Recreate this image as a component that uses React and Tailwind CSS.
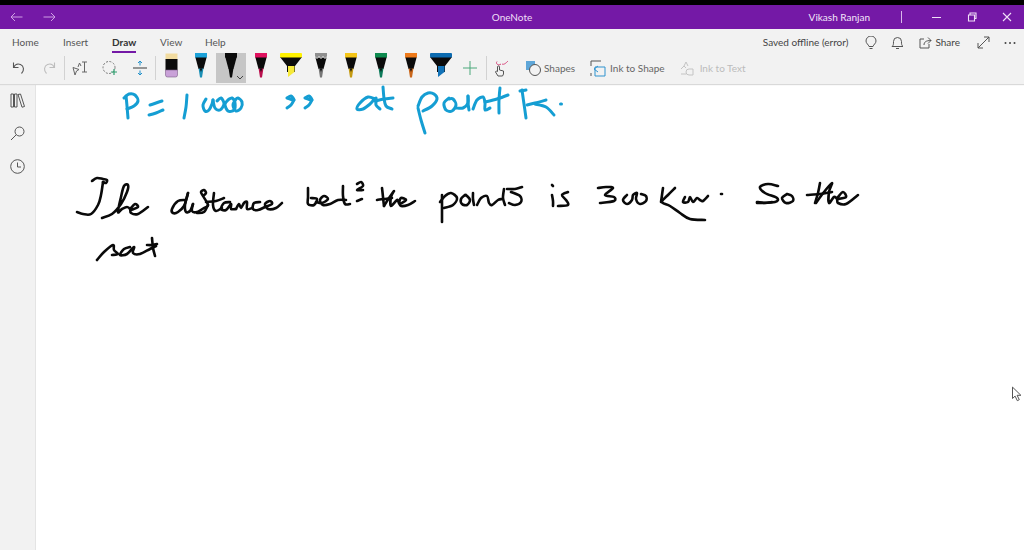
import React from "react";

const font = { fontFamily: 'Lato,"Open Sans","Noto Sans",sans-serif' };

function smooth(p) {
  let d = `M${p[0][0]} ${p[0][1]}`;
  for (let i = 0; i < p.length - 1; i++) {
    const a = p[Math.max(0, i - 1)], b = p[i], c = p[i + 1], e = p[Math.min(p.length - 1, i + 2)];
    const c1 = [b[0] + (c[0] - a[0]) / 6, b[1] + (c[1] - a[1]) / 6];
    const c2 = [c[0] - (e[0] - b[0]) / 6, c[1] - (e[1] - b[1]) / 6];
    d += ` C${c1[0].toFixed(1)} ${c1[1].toFixed(1)} ${c2[0].toFixed(1)} ${c2[1].toFixed(1)} ${c[0]} ${c[1]}`;
  }
  return d;
}

const blue = [
  [[126,96],[127,106],[128,118]],
  [[124,98],[129,94],[135,95],[138,101],[134,106],[127,109]],
  [[150,105],[156,103],[162,101]],
  [[149,115],[156,113],[163,110]],
  [[187,95],[186,107],[184,118]],
  [[206,99],[203,105],[205,111],[209,110],[212,104],[213,100]],
  [[213,100],[215,108],[220,110],[224,104],[221,98],[217,101]],
  [[229,99],[225,104],[228,111],[234,110],[235,103],[232,98],[228,100]],
  [[236,99],[233,105],[236,111],[241,108],[242,102],[238,98],[235,100]],
  [[287,98],[291,96],[294,100],[290,99],[287,98]],
  [[294,100],[291,105],[287,108]],
  [[305,98],[309,96],[312,100],[308,99],[305,98]],
  [[312,100],[309,105],[305,108]],
  [[375,99],[368,97],[360,103],[357,109],[363,109],[370,104],[376,98],[376,105],[380,109]],
  [[383,87],[384,98],[386,106],[392,109]],
  [[375,101],[384,99],[393,98]],
  [[418,108],[421,120],[425,133]],
  [[418,106],[422,97],[428,93],[434,94],[437,99],[432,106],[423,111]],
  [[449,98],[444,103],[446,110],[452,111],[456,105],[453,99],[449,99]],
  [[456,108],[463,108],[468,103],[468,96]],
  [[468,96],[468,103],[469,110]],
  [[473,109],[477,100],[483,97],[485,103],[485,110],[490,108]],
  [[500,88],[499,100],[499,113]],
  [[485,102],[497,99],[508,95]],
  [[522,90],[524,104],[526,118]],
  [[520,91],[526,90]],
  [[527,105],[535,103],[546,100]],
  [[535,104],[546,107],[554,115]],
  [[560.5,104],[561.5,104]],
];

const black = [
  [[92,181],[97,178],[103,179],[107,180],[106,183],[103,182]],
  [[103,182],[101,195],[98,205],[91,214],[83,214],[77,212]],
  [[102,218],[112,214],[121,204],[127,192],[128,185],[124,186],[121,197],[118,212],[122,209],[127,207],[130,209],[131,213],[138,214],[148,207]],
  [[131,210],[138,207],[135,204],[131,208]],
  [[186,200],[178,201],[172,209],[173,213],[178,212],[184,206],[187,197],[188,193]],
  [[188,193],[185,205],[186,212],[190,211],[193,204]],
  [[193,204],[192,211],[197,212],[204,208],[208,205],[203,196],[201,192],[204,190],[206,193],[203,196]],
  [[208,205],[204,212],[197,213]],
  [[206,202],[216,201],[224,198]],
  [[214,193],[213,205],[216,211],[222,208]],
  [[230,202],[224,203],[221,209],[226,210],[231,204],[231,209],[236,209]],
  [[236,209],[239,204],[241,208],[244,203],[247,202],[247,209],[252,208]],
  [[260,202],[254,203],[253,209],[258,210],[265,207]],
  [[265,207],[272,204],[270,201],[265,204],[268,209],[276,208],[282,203]],
  [[308,188],[308,197],[308,204],[314,205],[317,199],[311,198]],
  [[316,202],[322,203],[328,199],[324,196],[320,200],[323,205],[330,204],[338,200],[346,200]],
  [[343,186],[343,196],[345,204],[350,204]],
  [[357,184],[361,182],[363,186],[357,190],[363,190]],
  [[357,201],[362,199]],
  [[377,200],[385,199],[392,198]],
  [[382,188],[383,197],[384,206]],
  [[384,206],[389,198],[394,191],[391,197],[391,206],[397,200],[399,203],[401,206],[408,205],[415,201]],
  [[400,204],[406,200],[401,198],[399,203]],
  [[442,195],[442,208],[442,222]],
  [[440,202],[445,196],[451,193],[457,198],[453,205],[444,208]],
  [[465,195],[461,199],[462,204],[467,205],[470,200],[466,195]],
  [[473,193],[473,199],[474,205]],
  [[477,205],[481,198],[487,196],[489,203],[492,205],[498,200],[502,199]],
  [[504,189],[503,198],[505,205]],
  [[507,189],[515,189],[522,187]],
  [[511,192],[520,196],[521,202],[515,205],[509,203]],
  [[552,195],[553,201],[553,206]],
  [[552,185],[553,186]],
  [[568,192],[562,195],[566,200],[568,205],[558,206]],
  [[598,188],[606,187],[613,188],[605,195],[614,197],[614,201],[600,203]],
  [[627,195],[623,200],[627,204],[632,200],[633,195],[637,193],[636,199],[640,204],[646,201],[646,196],[641,194]],
  [[663,188],[662,195],[661,202]],
  [[675,188],[668,195],[662,202],[670,206],[680,213],[690,219],[705,220]],
  [[685,197],[683,202],[688,202],[690,197],[693,202],[697,198],[700,200],[703,201],[708,196]],
  [[721,194],[722,194]],
  [[778,186],[768,184],[760,187],[765,193],[777,198],[775,202],[757,203]],
  [[757,202],[765,203],[772,202]],
  [[787,194],[782,198],[786,203],[793,201],[792,196],[787,194]],
  [[807,195],[820,194],[832,192]],
  [[820,183],[818,193],[815,203]],
  [[816,203],[824,192],[832,183],[829,192],[829,203],[834,197],[837,199],[838,203],[846,204],[858,195]],
  [[838,199],[846,197],[843,192],[838,197]],
  [[97,260],[104,252],[113,245],[114,250],[118,254],[112,255]],
  [[130,247],[124,249],[120,255],[127,254],[134,247],[133,253],[140,254],[150,249],[156,246]],
  [[152,238],[153,248],[155,256]],
  [[147,245],[152,245],[157,244]],
];

function Ink() {
  return (
    <svg viewBox="36 84 988 466" className="block h-full w-full" fill="none" strokeLinecap="round" strokeLinejoin="round">
      <g stroke="#159ed3" strokeWidth="3">
        {blue.map((s, i) => <path key={i} d={smooth(s)} />)}
      </g>
      <g stroke="#0a0a0a" strokeWidth="2.6">
        {black.map((s, i) => <path key={i} d={smooth(s)} />)}
      </g>
      <path d="M1012.5 387.5v11l2.6-2.4 2.2 4.6 2-1-2.2-4.4h3.4z" fill="#fff" stroke="#555" strokeWidth="1" />
    </svg>
  );
}

function Pen({ band, tip, top }) {
  return (
    <svg width="14" height="26" viewBox="0 0 14 26">
      <path d="M1 3h12l-3.500 13h-5z" fill="#0b0b0b" />
      <rect x="1" y="0" width="12" height="4.500" fill={band} />
      <path d="M4.600 15.500h4.800L8 24.500H6z" fill={tip} />
      <path d="M5.800 15.500h2.400L7 19z" fill="#0b0b0b" />
      {top ? <path d="M1 3.500l2 2 2-2 2 2 2-2 2 2 2-2" stroke="#fff" strokeWidth="1" fill="none" /> : null}
    </svg>
  );
}

function Marker({ band, tip }) {
  return (
    <svg width="24" height="26" viewBox="0 0 24 26">
      <path d="M1 4h22l-7 9v6H8v-6z" fill="#0b0b0b" />
      <rect x="1" y="0" width="22" height="4.500" rx="1" fill={band} />
      <path d="M9 13h6.500v6L9 24z" fill={tip} />
    </svg>
  );
}

function Slot({ children, selected }) {
  return (
    <div className={`relative flex h-[30px] w-[30px] items-start justify-center ${selected ? "bg-[#c6c6c6]" : ""}`}>
      {children}
    </div>
  );
}

const Sep = () => <div className="h-[24px] w-px self-center bg-[#d2d2d2]" />;

function IconBtn({ children, w = "w-[30px]" }) {
  return <div className={`flex h-[30px] ${w} shrink-0 items-center justify-center`}>{children}</div>;
}

export default function App() {
  return (
    <div className="flex h-[550px] w-[1024px] flex-col overflow-hidden bg-white text-[#333]" style={font}>
      <div className="h-[5px] bg-black" />
      {/* Title bar */}
      <div className="relative flex h-[24px] items-center bg-[#7419a6] text-[10px] text-[#f0dff7]">
        <div className="flex w-[65px] items-center pl-[10px]">
          <svg width="13" height="10" viewBox="0 0 13 10" fill="none" stroke="#cf9fe4" strokeWidth="1"><path d="M12.500 5H1M5 1L1 5l4 4" /></svg>
          <svg width="13" height="10" viewBox="0 0 13 10" fill="none" stroke="#cf9fe4" strokeWidth="1" className="ml-[20px]"><path d="M.5 5H12M8 1l4 4-4 4" /></svg>
        </div>
        <div className="absolute left-0 right-0 top-[4px] text-center leading-[16px]">OneNote</div>
        <div className="ml-auto flex items-center">
          <span className="text-[#f3e6fa]">Vikash Ranjan</span>
          <div className="ml-[31px] h-[12px] w-px bg-[#d9b8ea]" />
          <div className="ml-[29px] flex w-[11px] justify-center"><div className="h-px w-[9px] bg-[#f0dff7]" /></div>
          <svg width="10" height="10" viewBox="0 0 10 10" fill="none" stroke="#f0dff7" strokeWidth="1.100" className="ml-[25px]"><path d="M1.500 3h6v6h-6zM3 3V1h6v5.500H7.500" /></svg>
          <svg width="10" height="10" viewBox="0 0 10 10" fill="none" stroke="#f0dff7" strokeWidth="1.100" className="ml-[25px] mr-[12px]"><path d="M1 1l8 8M9 1L1 9" /></svg>
        </div>
      </div>
      {/* Ribbon */}
      <div className="z-10 flex h-[55px] flex-col bg-[#f2f2f2] shadow-[0_1px_1px_#d9d9d9]">
        <div className="flex h-[24px] items-center pt-[3px] text-[10px]">
          <div className="flex items-center pl-[12px] text-[#555]">
            <span className="w-[51px]">Home</span>
            <span className="w-[49px]">Insert</span>
            <span className="relative w-[48px] font-bold text-[#333]">
              Draw
              <span className="absolute left-0 top-[16px] h-[2px] w-[24px] bg-[#7419a6]" />
            </span>
            <span className="w-[45px]">View</span>
            <span>Help</span>
          </div>
          <div className="ml-auto flex items-center text-[#444]">
            <span>Saved offline (error)</span>
            <svg width="12" height="14" viewBox="0 0 12 14" fill="none" stroke="#555" className="ml-[17px]"><path d="M4 10.500C3.500 8.500 1 7.500 1 5a5 5 0 0 1 10 0c0 2.500-2.500 3.500-3 5.500zM4.500 12.500h3" /></svg>
            <svg width="13" height="14" viewBox="0 0 13 14" fill="none" stroke="#555" className="ml-[14px]"><path d="M1 10.500c1.500-1 1.500-2.500 1.500-5a4 4 0 0 1 8 0c0 2.500 0 4 1.500 5zM5 12.500h3" /></svg>
            <svg width="13" height="13" viewBox="0 0 13 13" fill="none" stroke="#555" className="ml-[15px]"><path d="M5 3H1v9h9V8M5 9c0-3 2-4.500 7-4.500M9 1.500l3 3-3 3" /></svg>
            <span className="ml-[3px]">Share</span>
            <svg width="13" height="13" viewBox="0 0 13 13" fill="none" stroke="#555" className="ml-[17px]"><path d="M1 12L12 1M7 1h5v5M1 7v5h5" /></svg>
            <svg width="12" height="4" viewBox="0 0 12 4" fill="#444" className="ml-[14px] mr-[8px]"><circle cx="1.500" cy="2" r="1" /><circle cx="6" cy="2" r="1" /><circle cx="10.500" cy="2" r="1" /></svg>
          </div>
        </div>
        <div className="flex h-[30px] items-center text-[10px]">
          <div className="w-[4px]" />
          <IconBtn>
            <svg width="14" height="14" viewBox="0 0 14 14" fill="none" stroke="#555" strokeWidth="1.100"><path d="M1.500 1.500v5h5M1.500 6.500C3 3.500 6 2.500 8.500 3.500c3.500 1.500 4 6 1 9" /></svg>
          </IconBtn>
          <IconBtn>
            <svg width="14" height="14" viewBox="0 0 14 14" fill="none" stroke="#bdbdbd" strokeWidth="1.100"><path d="M12.500 1.500v5h-5M12.500 6.500C11 3.500 8 2.500 5.500 3.500c-3.500 1.500-4 6-1 9" /></svg>
          </IconBtn>
          <Sep />
          <IconBtn>
            <svg width="16" height="15" viewBox="0 0 16 15" fill="none" stroke="#666"><path d="M1 6.500l6 2-2.500 1.500L3 14zM6 6l1.500-4L9 5M10 1h5M12.500 1v10M10 11h5" /></svg>
          </IconBtn>
          <IconBtn>
            <svg width="16" height="16" viewBox="0 0 16 16" fill="none"><circle cx="7" cy="7.500" r="6" stroke="#777" strokeDasharray="2 1.500" /><path d="M12 9v6M9 12h6" stroke="#2f9e6e" strokeWidth="1.200" /></svg>
          </IconBtn>
          <IconBtn>
            <svg width="14" height="16" viewBox="0 0 14 16" fill="none"><path d="M0 8h14" stroke="#777" strokeWidth="1.500" /><path d="M7 5.500V1M5 3l2-2 2 2M7 10.500V15M5 13l2 2 2-2" stroke="#1f8fc9" /></svg>
          </IconBtn>
          <Sep />
          <div className="flex h-[30px] items-start">
            <Slot>
              <svg width="13" height="25" viewBox="0 0 13 25">
                <rect x="0.500" y="0.500" width="12" height="6" fill="#f1dba0" />
                <rect x="0.500" y="6" width="12" height="11" fill="#0b0b0b" />
                <path d="M.5 17h12v5a2 2 0 0 1-2 2h-8a2 2 0 0 1-2-2z" fill="#c9a1d8" stroke="#7a5b87" strokeWidth=".6" />
              </svg>
            </Slot>
            <Slot><Pen band="#1ba1d8" tip="#1a8fb5" /></Slot>
            <Slot selected>
              <Pen band="#0b0b0b" tip="#0b0b0b" />
              <svg width="8" height="5" viewBox="0 0 8 5" fill="none" stroke="#444" className="absolute bottom-[3px] right-[2px]"><path d="M1 1l3 3 3-3" /></svg>
            </Slot>
            <Slot><Pen band="#e0125f" tip="#b90f4d" /></Slot>
            <Slot><Marker band="#fff200" tip="#f6e93a" /></Slot>
            <Slot><Pen band="#8f8f8f" tip="#777" top /></Slot>
            <Slot><Pen band="#f5c518" tip="#c49a12" /></Slot>
            <Slot><Pen band="#0e8a4f" tip="#0d7a5a" /></Slot>
            <Slot><Pen band="#ee7a1a" tip="#c9661a" /></Slot>
            <Slot><Marker band="#0c6bb0" tip="#1273b8" /></Slot>
          </div>
          <IconBtn w="w-[28px]">
            <svg width="14" height="14" viewBox="0 0 14 14" stroke="#4aa87a"><path d="M7 0v14M0 7h14" /></svg>
          </IconBtn>
          <div className="ml-[2px] h-[24px] w-px self-center bg-[#d2d2d2]" />
          <IconBtn w="w-[28px]">
            <svg width="16" height="18" viewBox="0 0 16 18" fill="none"><path d="M8 5C6 7 2 5 4 2.500M9 5c2 1 4-1 6-3" stroke="#d8457a" /><path d="M5 17l-2.500-4c0-1 1-1 2-.5V8c0-1.500 2-1.500 2 0v3l4 1v3l-1 2z" stroke="#555" /></svg>
          </IconBtn>
          <svg width="16" height="16" viewBox="0 0 16 16" fill="none" className="ml-[10px]"><rect x="1" y="1" width="9" height="9" fill="#5ea6d8" /><circle cx="10" cy="10" r="5.500" fill="#f2f2f2" stroke="#555" /></svg>
          <span className="ml-[3px] pt-[1px] text-[#666]">Shapes</span>
          <svg width="16" height="17" viewBox="0 0 16 17" fill="none" className="ml-[15px]"><path d="M1 1h10M1 1v5M1 13v3" stroke="#555" /><path d="M5 7h10v9H5z" stroke="#2f93cf" /><path d="M8 6L4 9l4 3" stroke="#2f93cf" /></svg>
          <span className="ml-[4px] pt-[1px] text-[#666]">Ink to Shape</span>
          <svg width="15" height="15" viewBox="0 0 15 15" fill="none" stroke="#c4c4c4" className="ml-[15px]"><path d="M1 8l3-3 2 2M1 13h5M9 8a3 3 0 1 0 0 6h4V8z" /><path d="M6 1l2 4M6 1L4 5" /></svg>
          <span className="ml-[5px] pt-[1px] text-[#bcbcbc]">Ink to Text</span>
        </div>
      </div>
      {/* Body */}
      <div className="flex min-h-0 flex-1">
        <div className="flex w-[36px] shrink-0 flex-col items-center gap-[18px] border-r border-[#e4e4e4] bg-[#f2f2f2] pt-[9px]">
          <svg width="15" height="15" viewBox="0 0 15 15" fill="none" stroke="#555"><path d="M1 1h2.500v13H1zM4.500 1H7v13H4.500zM8 1.500l2.500-.5 4 12.500-2.500.7z" /></svg>
          <svg width="15" height="15" viewBox="0 0 15 15" fill="none" stroke="#555"><circle cx="9.500" cy="5.500" r="4.500" /><path d="M6.300 8.700L1 14" /></svg>
          <svg width="15" height="15" viewBox="0 0 15 15" fill="none" stroke="#555"><circle cx="7.500" cy="7.500" r="6.800" /><path d="M7.500 3.500v4.500h3.500" /></svg>
        </div>
        <div className="min-w-0 flex-1 bg-white">
          <Ink />
        </div>
      </div>
    </div>
  );
}
